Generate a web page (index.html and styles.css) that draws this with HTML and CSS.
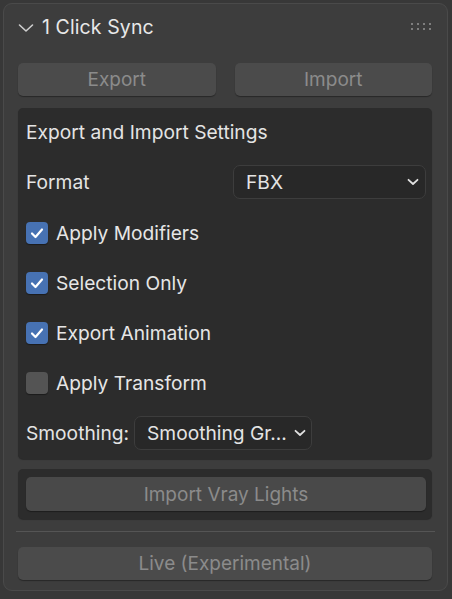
FILE: index.html
```html
<!DOCTYPE html>
<html>
<head>
<meta charset="utf-8">
<link rel="stylesheet" href="styles.css">
</head>
<body>
<div class="panel">
  <div class="header">
    <svg class="chev" width="16" height="10" viewBox="0 0 16 10"><path d="M1.5 2 L8 8 L14.5 2" fill="none" stroke="#cfcfcf" stroke-width="1.6" stroke-linecap="round" stroke-linejoin="round"/></svg>
    <span class="title">1 Click Sync</span>
    <span class="grip">
      <i></i><i></i><i></i><i></i><i></i><i></i><i></i><i></i>
    </span>
  </div>
  <div class="btnrow">
    <div class="btn">Export</div>
    <div class="btn">Import</div>
  </div>
  <div class="box settings">
    <div class="boxtitle">Export and Import Settings</div>
    <div class="row split">
      <span class="label">Format</span>
      <div class="dropdown fmt"><span>FBX</span><svg width="12" height="8" viewBox="0 0 12 8"><path d="M1.5 1.8 L6 6 L10.5 1.8" fill="none" stroke="#e0e0e0" stroke-width="1.8" stroke-linecap="round" stroke-linejoin="round"/></svg></div>
    </div>
    <div class="row check"><span class="cb on"><svg width="16" height="14" viewBox="0 0 16 14"><path d="M3 7.5 L6.5 11 L13 3.5" fill="none" stroke="#fff" stroke-width="2.2" stroke-linecap="round" stroke-linejoin="round"/></svg></span><span class="label">Apply Modifiers</span></div>
    <div class="row check"><span class="cb on"><svg width="16" height="14" viewBox="0 0 16 14"><path d="M3 7.5 L6.5 11 L13 3.5" fill="none" stroke="#fff" stroke-width="2.2" stroke-linecap="round" stroke-linejoin="round"/></svg></span><span class="label">Selection Only</span></div>
    <div class="row check"><span class="cb on"><svg width="16" height="14" viewBox="0 0 16 14"><path d="M3 7.5 L6.5 11 L13 3.5" fill="none" stroke="#fff" stroke-width="2.2" stroke-linecap="round" stroke-linejoin="round"/></svg></span><span class="label">Export Animation</span></div>
    <div class="row check"><span class="cb"></span><span class="label">Apply Transform</span></div>
    <div class="row smooth">
      <span class="label">Smoothing:</span>
      <div class="dropdown sm"><span>Smoothing Gr...</span><svg width="12" height="8" viewBox="0 0 12 8"><path d="M1.5 1.8 L6 6 L10.5 1.8" fill="none" stroke="#e0e0e0" stroke-width="1.8" stroke-linecap="round" stroke-linejoin="round"/></svg></div>
    </div>
  </div>
  <div class="box vray">
    <div class="btn wide">Import Vray Lights</div>
  </div>
  <div class="sep"></div>
  <div class="btn live">Live (Experimental)</div>
</div>
</body>
</html>
```
FILE: styles.css
```css
* { box-sizing: border-box; }
html, body { margin: 0; padding: 0; }
body {
  width: 452px;
  height: 599px;
  background: #383838;
  font-family: Inter, "Noto Sans", sans-serif;
  color: #e4e4e4;
  overflow: hidden;
}
.panel {
  margin: 3px 0 0 3px;
  width: 445px;
  height: 588px;
  background: #3d3d3d;
  border: 1px solid #4a4a4a;
  border-radius: 9px;
  padding: 0 15px 0 14px;
  display: flex;
  flex-direction: column;
}
.header {
  height: 46px;
  display: flex;
  align-items: center;
  position: relative;
}
.chev { margin-left: 0; margin-right: 8px; margin-top: 1px; }
.title { font-size: 19.5px; color: #e8e8e8; letter-spacing: 0.1px; }
.grip {
  position: absolute;
  right: 1px;
  top: 19px;
  width: 20px;
  display: grid;
  grid-template-columns: repeat(4, 2px);
  column-gap: 4px;
  row-gap: 3px;
}
.grip i { width: 2px; height: 2px; background: #7e7e7e; display: block; }
.btnrow {
  margin-top: 13px;
  display: grid;
  grid-template-columns: 1fr 1fr;
  column-gap: 19px;
}
.btn {
  height: 33px;
  background: #4b4b4b;
  border-radius: 5px;
  box-shadow: 0 1px 1px rgba(0,0,0,0.35);
  display: flex;
  align-items: center;
  justify-content: center;
  color: #8b8b8b;
  font-size: 19px;
}
.box {
  background: #2c2c2c;
  border-radius: 5px;
  box-shadow: 0 1px 1px rgba(0,0,0,0.3);
}
.settings {
  margin-top: 12px;
  height: 351px;
  padding: 0 6px 0 8px;
}
.boxtitle {
  height: 48px;
  display: flex;
  align-items: center;
  font-size: 19.2px;
}
.row {
  height: 50px;
  display: flex;
  align-items: center;
  font-size: 19.2px;
}
.split { justify-content: space-between; height: 52px; }
.dropdown {
  height: 34px;
  background: #282828;
  border: 1.5px solid #3d3d3d;
  border-radius: 7px;
  display: flex;
  align-items: center;
  justify-content: space-between;
  padding: 0 6px 0 12px;
  font-size: 19.2px;
  color: #e4e4e4;
}
.fmt { width: 193px; }
.cb {
  width: 22px;
  height: 22px;
  border-radius: 4px;
  background: #545454;
  box-shadow: 0 1px 1px rgba(0,0,0,0.4);
  margin-right: 8px;
  display: flex;
  align-items: center;
  justify-content: center;
}
.cb.on { background: #4772b3; }
.check .label { color: #e6e6e6; }
.smooth .label { margin-right: 5px; }
.sm { width: 178px; padding-right: 5px; }
.vray {
  margin-top: 10px;
  height: 50px;
  padding: 8px 6px 8px 8px;
}
.wide { height: 34px; background: #494949; }
.sep {
  margin: 12px -3px 0 -2px;
  height: 1px;
  background: #555555;
}
.live { margin-top: 15px; }
```
